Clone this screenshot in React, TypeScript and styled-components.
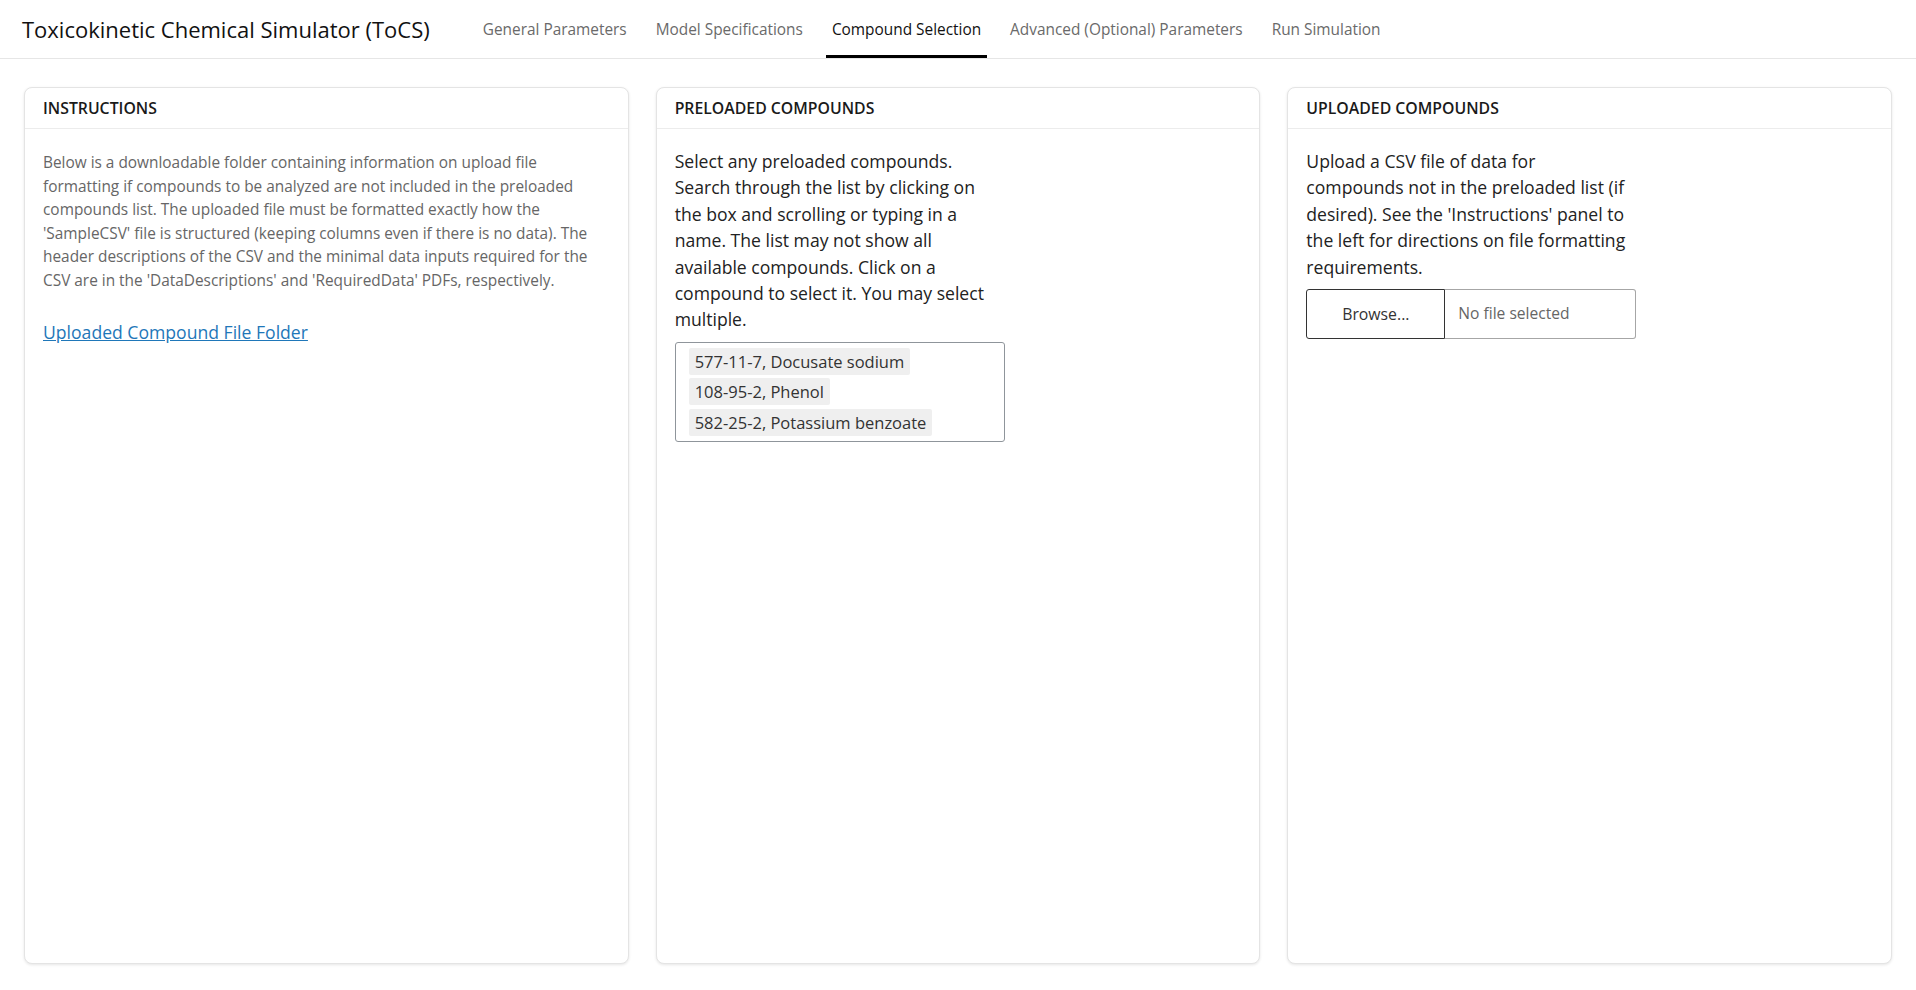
import React from "react";
import styled, { createGlobalStyle } from "styled-components";

const GlobalStyle = createGlobalStyle`
  * { box-sizing: border-box; }
  html, body { margin: 0; padding: 0; background: #ffffff; }
  body {
    font-family: "Open Sans", "Noto Sans", "Liberation Sans", sans-serif;
    font-size: 17.6px;
    line-height: 1.5;
    color: #222222;
  }
`;

const Page = styled.div`
  height: 100vh;
  display: flex;
  flex-direction: column;
`;

const Header = styled.header`
  height: 59px;
  flex: 0 0 59px;
  display: flex;
  align-items: stretch;
  padding-left: 22px;
  border-bottom: 1px solid #e6e6e6;
`;

const Brand = styled.div`
  display: flex;
  align-items: center;
  font-size: 22px;
  color: #111111;
  white-space: nowrap;
`;

const Nav = styled.nav`
  display: flex;
  align-items: stretch;
  gap: 17px;
  margin-left: 47px;
`;

const Tab = styled.a<{ $active?: boolean }>`
  display: flex;
  align-items: center;
  padding: 5px 6px 0;
  font-size: 15.4px;
  color: ${(p) => (p.$active ? "#111111" : "#6a6a6a")};
  border-bottom: 3px solid ${(p) => (p.$active ? "#000000" : "transparent")};
  text-decoration: none;
  white-space: nowrap;
  cursor: pointer;
`;

const Main = styled.main`
  flex: 1;
  min-height: 0;
  display: grid;
  grid-template-columns: repeat(3, 1fr);
  gap: 27px;
  padding: 28px 24px 26px;
`;

const Card = styled.section`
  display: flex;
  flex-direction: column;
  background: #ffffff;
  border: 1px solid #e4e4e4;
  border-radius: 8px;
  box-shadow: 0 1px 3px rgba(0, 0, 0, 0.1);
  overflow: hidden;
`;

const CardHeader = styled.div`
  padding: 8.5px 18px;
  font-size: 15.8px;
  font-weight: 600;
  line-height: 23px;
  color: #1a1a1a;
  border-bottom: 1px solid #ececec;
`;

const CardBody = styled.div`
  flex: 1;
  padding: 19px 18px 16px;
`;

const SmallText = styled.p`
  margin: 3px 0 27px;
  font-size: 15.4px;
  line-height: 23.5px;
  color: #666666;
`;

const FolderLink = styled.a`
  font-size: 17.6px;
  color: #1f77b9;
  text-decoration: underline;
  cursor: pointer;
`;

const InputGroup = styled.div`
  width: 330px;
`;

const Lead = styled.p`
  margin: 0;
  font-size: 17.6px;
  line-height: 26.4px;
  color: #222222;
`;

const SelectBox = styled.div`
  margin-top: 9px;
  border: 1px solid #8f959b;
  border-radius: 3px;
  padding: 5px 12px 5px 13px;
  display: flex;
  flex-direction: column;
  align-items: flex-start;
  gap: 3.5px;
`;

const SelectItem = styled.div`
  background: #efefef;
  border-radius: 2px;
  padding: 0 6px;
  height: 27px;
  line-height: 27px;
  font-size: 16.5px;
  color: #333333;
  white-space: nowrap;
`;

const FileInput = styled.div`
  margin-top: 9px;
  display: flex;
  height: 50px;
`;

const BrowseButton = styled.button`
  width: 139px;
  flex: 0 0 139px;
  font-family: inherit;
  font-size: 15.8px;
  color: #333333;
  background: #ffffff;
  border: 1px solid #333333;
  border-radius: 3px 0 0 3px;
  cursor: pointer;
`;

const FileName = styled.div`
  flex: 1;
  display: flex;
  align-items: center;
  padding-left: 13px;
  font-size: 15.6px;
  color: #666666;
  border: 1px solid #a6a6a6;
  border-left: none;
  border-radius: 0 3px 3px 0;
`;

const tabs = [
  "General Parameters",
  "Model Specifications",
  "Compound Selection",
  "Advanced (Optional) Parameters",
  "Run Simulation",
];

const compounds = [
  "577-11-7, Docusate sodium",
  "108-95-2, Phenol",
  "582-25-2, Potassium benzoate",
];

export default function App() {
  return (
    <>
      <GlobalStyle />
      <Page>
        <Header>
          <Brand>Toxicokinetic Chemical Simulator (ToCS)</Brand>
          <Nav>
            {tabs.map((t) => (
              <Tab key={t} $active={t === "Compound Selection"}>
                {t}
              </Tab>
            ))}
          </Nav>
        </Header>
        <Main>
          <Card>
            <CardHeader>INSTRUCTIONS</CardHeader>
            <CardBody>
              <SmallText>
                Below is a downloadable folder containing information on upload file
                formatting if compounds to be analyzed are not included in the preloaded
                compounds list. The uploaded file must be formatted exactly how the
                'SampleCSV' file is structured (keeping columns even if there is no data).
                The header descriptions of the CSV and the minimal data inputs required
                for the CSV are in the 'DataDescriptions' and 'RequiredData' PDFs,
                respectively.
              </SmallText>
              <FolderLink>Uploaded Compound File Folder</FolderLink>
            </CardBody>
          </Card>
          <Card>
            <CardHeader>PRELOADED COMPOUNDS</CardHeader>
            <CardBody>
              <InputGroup>
                <Lead>
                  Select any preloaded compounds. Search through the list by clicking on
                  the box and scrolling or typing in a name. The list may not show all
                  available compounds. Click on a compound to select it. You may select
                  multiple.
                </Lead>
                <SelectBox>
                  {compounds.map((c) => (
                    <SelectItem key={c}>{c}</SelectItem>
                  ))}
                </SelectBox>
              </InputGroup>
            </CardBody>
          </Card>
          <Card>
            <CardHeader>UPLOADED COMPOUNDS</CardHeader>
            <CardBody>
              <InputGroup>
                <Lead>
                  Upload a CSV file of data for compounds not in the preloaded list (if
                  desired). See the 'Instructions' panel to the left for directions on
                  file formatting requirements.
                </Lead>
                <FileInput>
                  <BrowseButton type="button">Browse...</BrowseButton>
                  <FileName>No file selected</FileName>
                </FileInput>
              </InputGroup>
            </CardBody>
          </Card>
        </Main>
      </Page>
    </>
  );
}
